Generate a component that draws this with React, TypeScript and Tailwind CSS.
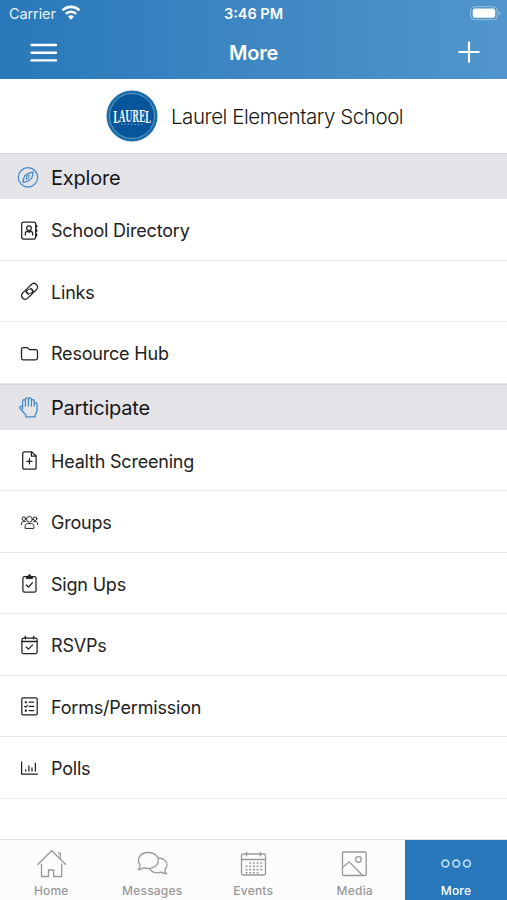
import type { ReactNode } from 'react';
import clsx from 'clsx';

type IconProps = { children: ReactNode; className?: string };

const Icon = ({ children, className }: IconProps) => (
  <svg
    viewBox="0 0 24 24"
    fill="none"
    stroke="currentColor"
    strokeWidth="1.25"
    strokeLinecap="round"
    strokeLinejoin="round"
    className={clsx('h-6 w-6 shrink-0', className)}
  >
    {children}
  </svg>
);

const CompassIcon = () => (
  <Icon className="text-[#4088c6]">
    <circle cx="11" cy="12.3" r="9.7" />
    <path d="M16.1 7.2c-.2 2-.6 4.3-1.6 6.4-2.1 2.1-5 3.3-8.5 3.8.2-2.5.8-4.8 1.9-6.9 2.3-1.9 5.2-3 8.2-3.3Z" />
    <path d="m12.2 10.3-.4 2.9-2.6 1.3.5-2.9Z" strokeWidth="1" />
  </Icon>
);

const HandIcon = () => (
  <Icon className="text-[#4088c6]">
    <path d="M5.6 14V6.2c0-2 2.8-2 2.8 0V11 4.6c0-2.3 3-2.3 3 0V11 4.6c0-2.2 3-2.2 3 0V11 6.2c0-2 2.8-2 2.8 0V11 9c0-1.9 2.8-1.9 2.8 0v6.6c0 1.8-1.3 2.7-1.9 4.3v2H8.8v-2.1c-2-1.6-4-4.4-5.8-6.6-.9-1.4.7-2.6 1.9-1.5l.7.8" />
  </Icon>
);

const DirectoryIcon = () => (
  <Icon>
    <rect x="4.7" y="4" width="14" height="17" rx="2" />
    <path d="M18.9 7.3h.8v1.8h-.8M18.9 11.7h.8v1.8h-.8M18.9 16h.8v1.8h-.8" />
    <circle cx="12" cy="10.2" r="2.3" />
    <path d="M8.3 17v-1.1c0-1.5.9-2.5 2.2-2.5l1.5.7 1.5-.7c1.3 0 2.2 1 2.2 2.5V17" />
  </Icon>
);

const LinksIcon = () => (
  <Icon>
    <path d="M11.4 15.2c-2.3-1-3-3.7-1.2-5.6l3.9-3.9c3.6-3.6 8.7 1.2 5.2 5l-3 3" />
    <path d="M13.7 9.4c2.3 1 3 3.7 1.2 5.6L11 18.9c-3.6 3.6-8.7-1.2-5.2-5l3-3" />
    <path d="M10.2 9.6c-1.1 1.3-.9 3 .3 4.1 1.2 1.1 2.7 1 3.8 0l2-2M14.9 15c1.1-1.3.9-3-.3-4.1-1.2-1.1-2.7-1-3.8 0l-2 2" strokeWidth="1" />
  </Icon>
);

const FolderIcon = () => (
  <Icon>
    <path d="M6 6.6h4.4l2.2 2.1h6.1c1.2 0 1.8.6 1.8 1.7v6.7c0 1.1-.6 1.7-1.8 1.7H6c-1 0-1.5-.6-1.5-1.7V8.2c0-1.1.5-1.6 1.5-1.6Z" />
  </Icon>
);

const FilePlusIcon = () => (
  <Icon>
    <path d="M7.6 3.8h7L19.1 8v11.2c0 1.2-.7 2-1.9 2H7.6c-1.2 0-1.9-.8-1.9-2V5.8c0-1.2.7-2 1.9-2Z" />
    <path d="M14.4 4v4.2H19M12.4 10.7v5.2M9.8 13.3H15" />
  </Icon>
);

const GroupsIcon = () => (
  <Icon>
    <g strokeWidth="1">
      <circle cx="12.5" cy="9.3" r="2.9" />
      <path d="M8.1 18v-1.7c0-1.7 1-2.7 2.4-2.7h4c1.4 0 2.4 1 2.4 2.7V18Z" />
      <circle cx="6.9" cy="8.7" r="1.8" />
      <circle cx="18.1" cy="8.7" r="1.8" />
      <path d="M4.5 14.5v-1.3c0-1 .7-1.6 1.6-1.6h2.2M20.5 14.5v-1.3c0-1-.7-1.6-1.6-1.6h-2.2" />
    </g>
  </Icon>
);

const SignUpIcon = () => (
  <Icon>
    <path d="M9.5 5.7h-2c-1 0-1.6.6-1.6 1.6v12.1c0 1 .6 1.6 1.6 1.6h9.900c1 0 1.600-.6 1.600-1.600V7.300c0-1-.6-1.600-1.600-1.600h-2" />
    <path d="M9.4 7.2V5.5H11c.2-2.5 2.700-2.500 2.900 0h1.600v1.700Z" fill="currentColor" strokeWidth="1" />
    <path d="m9.300 14 2.300 2 3.900-4.300" />
  </Icon>
);

const RsvpIcon = () => (
  <Icon>
    <rect x="4.9" y="5" width="15.2" height="15.7" rx="1.8" />
    <path d="M5 8.5h15M8.3 3.5v2.2M16.6 3.5v2.2" strokeWidth="1.5" />
    <path d="m9.1 14 2.4 2.1 4.1-4.2" />
  </Icon>
);

const FormsIcon = () => (
  <Icon>
    <rect x="4.8" y="3.9" width="15.4" height="17" rx="1.2" />
    <path d="M12.1 8.2h4.6M12.1 12.4h4.6M12.1 16.6h4.6M7.7 12.4l1.1.8 1.6-1.8" />
    <path d="M8.4 7.8h.9v.9h-.9ZM8.4 16.1h.9v.9h-.9Z" fill="currentColor" />
  </Icon>
);

const PollsIcon = () => (
  <Icon>
    <path d="M4.6 5.5v12.6h16.3M8.7 13.2v2.3M11.9 9.5v6M15 11.5v4M18.4 6.8v8.7" strokeLinecap="butt" />
  </Icon>
);

type MenuItem = { label: string; icon: ReactNode };

const exploreItems: MenuItem[] = [
  { label: 'School Directory', icon: <DirectoryIcon /> },
  { label: 'Links', icon: <LinksIcon /> },
  { label: 'Resource Hub', icon: <FolderIcon /> },
];

const participateItems: MenuItem[] = [
  { label: 'Health Screening', icon: <FilePlusIcon /> },
  { label: 'Groups', icon: <GroupsIcon /> },
  { label: 'Sign Ups', icon: <SignUpIcon /> },
  { label: 'RSVPs', icon: <RsvpIcon /> },
  { label: 'Forms/Permission', icon: <FormsIcon /> },
  { label: 'Polls', icon: <PollsIcon /> },
];

const Header = () => (
  <header className="h-[79px] shrink-0 bg-linear-to-r from-[#2878b9] to-[#5195cc] text-white">
    <div className="grid h-7 grid-cols-3 items-center px-[9px]">
      <div className="flex items-center gap-[5px] text-[14.5px] tracking-[-0.1px] text-white/90">
        Carrier
        <svg viewBox="0 0 20 16" className="-mt-0.5 h-4 w-5" fill="none" stroke="white" strokeWidth="2.7">
          <path d="M1.5 5.4a12 12 0 0 1 17 0M4.8 8.9a7.4 7.4 0 0 1 10.4 0" />
          <path d="M7 11.7a4.3 4.3 0 0 1 6 0L10 14.8Z" fill="white" stroke="none" />
        </svg>
      </div>
      <div className="text-center text-[14.5px] font-semibold whitespace-nowrap">3:46 PM</div>
      <div className="-mr-[3px] flex justify-end">
        <svg viewBox="0 0 31 15" className="-mt-0.5 h-[15px] w-[31px]">
          <rect x=".7" y=".7" width="26.5" height="13" rx="4" fill="none" stroke="white" strokeOpacity=".4" />
          <rect x="2.7" y="2.6" width="22.5" height="9.2" rx="2.2" fill="white" />
          <path d="M28.6 5c2 .7 2 3.7 0 4.4Z" fill="white" fillOpacity=".4" />
        </svg>
      </div>
    </div>
    <div className="grid h-[49px] grid-cols-3 items-center px-[27px]">
      <svg viewBox="0 0 33 24" className="h-6 w-[33px]" stroke="white" strokeWidth="2.4" strokeLinecap="round">
        <path d="M4.5 4h24.5M4.5 11.7h24.5M4.5 19.4h24.5" />
      </svg>
      <h1 className="text-center text-[20px] font-semibold tracking-[-0.2px]">More</h1>
      <svg viewBox="0 0 22 22" className="-mt-px h-[22px] w-[22px] justify-self-end" stroke="white" strokeWidth="2.2">
        <path d="M11 .4v21.2M.4 11h21.2" />
      </svg>
    </div>
  </header>
);

const SchoolLogo = () => (
  <svg viewBox="0 0 52 52" className="h-[52px] w-[52px] shrink-0">
    <circle cx="26" cy="26" r="25.5" fill="#176ca9" />
    <circle cx="26" cy="26" r="22.5" fill="#07559a" stroke="#75a9cb" strokeWidth=".8" />
    <text
      transform="translate(26 31.5) scale(1 1.75)"
      textAnchor="middle"
      fill="#f0f6fa"
      fontFamily="'DejaVu Serif Condensed', 'DejaVu Serif', serif"
      fontWeight="700"
      fontSize="9"
    >
      <tspan dy=".9">L</tspan>
      <tspan dy="-.9">AURE</tspan>
      <tspan dy=".9">L</tspan>
    </text>
    <path d="M15 34.2h22" stroke="#5c96c0" strokeWidth="1.4" strokeDasharray="1.5 1.8" />
  </svg>
);

const Section = ({ title, icon, items }: { title: string; icon: ReactNode; items: MenuItem[] }) => (
  <section>
    <h2 className="flex h-[46px] items-center gap-2.5 border-t border-[#d6d5da] bg-[#e4e3e8] pl-[17px] text-[20px] tracking-[-0.2px] text-[#151517]">
      {icon}
      <span className="mt-0.5">{title}</span>
    </h2>
    <ul>
      {items.map((item) => (
        <li
          key={item.label}
          className="flex h-[61.5px] items-center gap-2.5 border-b-[1.5px] border-[#ebebed] pt-px pl-[17px] text-[18px] tracking-[-0.2px] text-[#222]"
        >
          {item.icon}
          <span className="mt-0.5">{item.label}</span>
        </li>
      ))}
    </ul>
  </section>
);

const tabs = [
  {
    label: 'Home',
    icon: <path d="m2.5 15.7 14.2-14L31 15.7M6.5 14.5v13h7v-6.5h5.2v6.5h8v-13M23 4.2h2.3v5.5" />,
  },
  {
    label: 'Messages',
    icon: (
      <>
        <path d="M12.3 3.5c6 0 10 3.5 10 8.1s-4.2 8-10 8c-1.8 0-3.3-.2-4.7-.9-1.5 1.2-3 1.9-5.1 1.9 1.2-1.3 1.7-2.6 1.6-4.5C.2 10.3 3.7 3.5 12.3 3.5Z" />
        <path d="M22.2 9c5.2 0 8.7 3 8.7 7 0 2.1-.8 3.6-2.2 4.9.2 1.6.8 2.7 1.8 3.7-2.1 0-3.6-.5-5.2-1.5-4.6 1.4-9.3.1-11.7-3.2" />
      </>
    ),
  },
  {
    label: 'Events',
    icon: (
      <>
        <rect x="4.5" y="5" width="24" height="21" rx="1.5" />
        <path d="M4.5 10.5h24M9.5 2.7v4.5M23.5 2.7v4.5" />
        <path d="M12.2 14h13M8.5 17.3h17M8.5 20.6h17M8.5 23.7h13" strokeDasharray="2 1.7" strokeWidth="1.6" />
      </>
    ),
  },
  {
    label: 'Media',
    icon: (
      <>
        <rect x="4.5" y="3" width="23.7" height="23.5" rx="1" />
        <circle cx="20.5" cy="10.5" r="2.8" />
        <path d="m4.7 18.3 6.5-5.5L24.7 26.5" />
      </>
    ),
  },
  {
    label: 'More',
    icon: (
      <g stroke="#b8dcfa" strokeWidth="1.7">
        <circle cx="5.4" cy="14.5" r="3.400" />
        <circle cx="16.2" cy="14.5" r="3.400" />
        <circle cx="27" cy="14.5" r="3.400" />
      </g>
    ),
  },
];

const TabBar = () => (
  <nav className="grid h-[61px] shrink-0 grid-cols-[101px_101px_101px_102px_102px] border-t border-[#dedede] bg-[#fcfcfc]">
    {tabs.map((tab) => (
      <div
        key={tab.label}
        className={clsx(
          'flex flex-col items-center pt-[9px] text-[12px] font-medium tracking-[0.2px]',
          tab.label === 'More' ? 'bg-[#2878bb] text-white' : 'pl-[1.5px] text-[#999]',
        )}
      >
        <svg viewBox="0 0 33 30" className="h-[30px] w-[33px]" fill="none" stroke="currentColor" strokeWidth="1.3">
          {tab.icon}
        </svg>
        <span className="mt-1 leading-4">{tab.label}</span>
      </div>
    ))}
  </nav>
);

const App = () => (
  <div className="flex h-screen flex-col overflow-hidden bg-white font-['Inter','Liberation_Sans',sans-serif]">
    <Header />
    <div className="flex h-[74px] shrink-0 items-center gap-[13px] pl-[106px]">
      <SchoolLogo />
      <span className="mt-0.5 text-[20.5px] font-light tracking-[-0.45px] whitespace-nowrap text-[#171717]">
        Laurel Elementary School
      </span>
    </div>
    <main className="min-h-0 flex-1">
      <Section title="Explore" icon={<CompassIcon />} items={exploreItems} />
      <Section title="Participate" icon={<HandIcon />} items={participateItems} />
    </main>
    <TabBar />
  </div>
);

export default App;
